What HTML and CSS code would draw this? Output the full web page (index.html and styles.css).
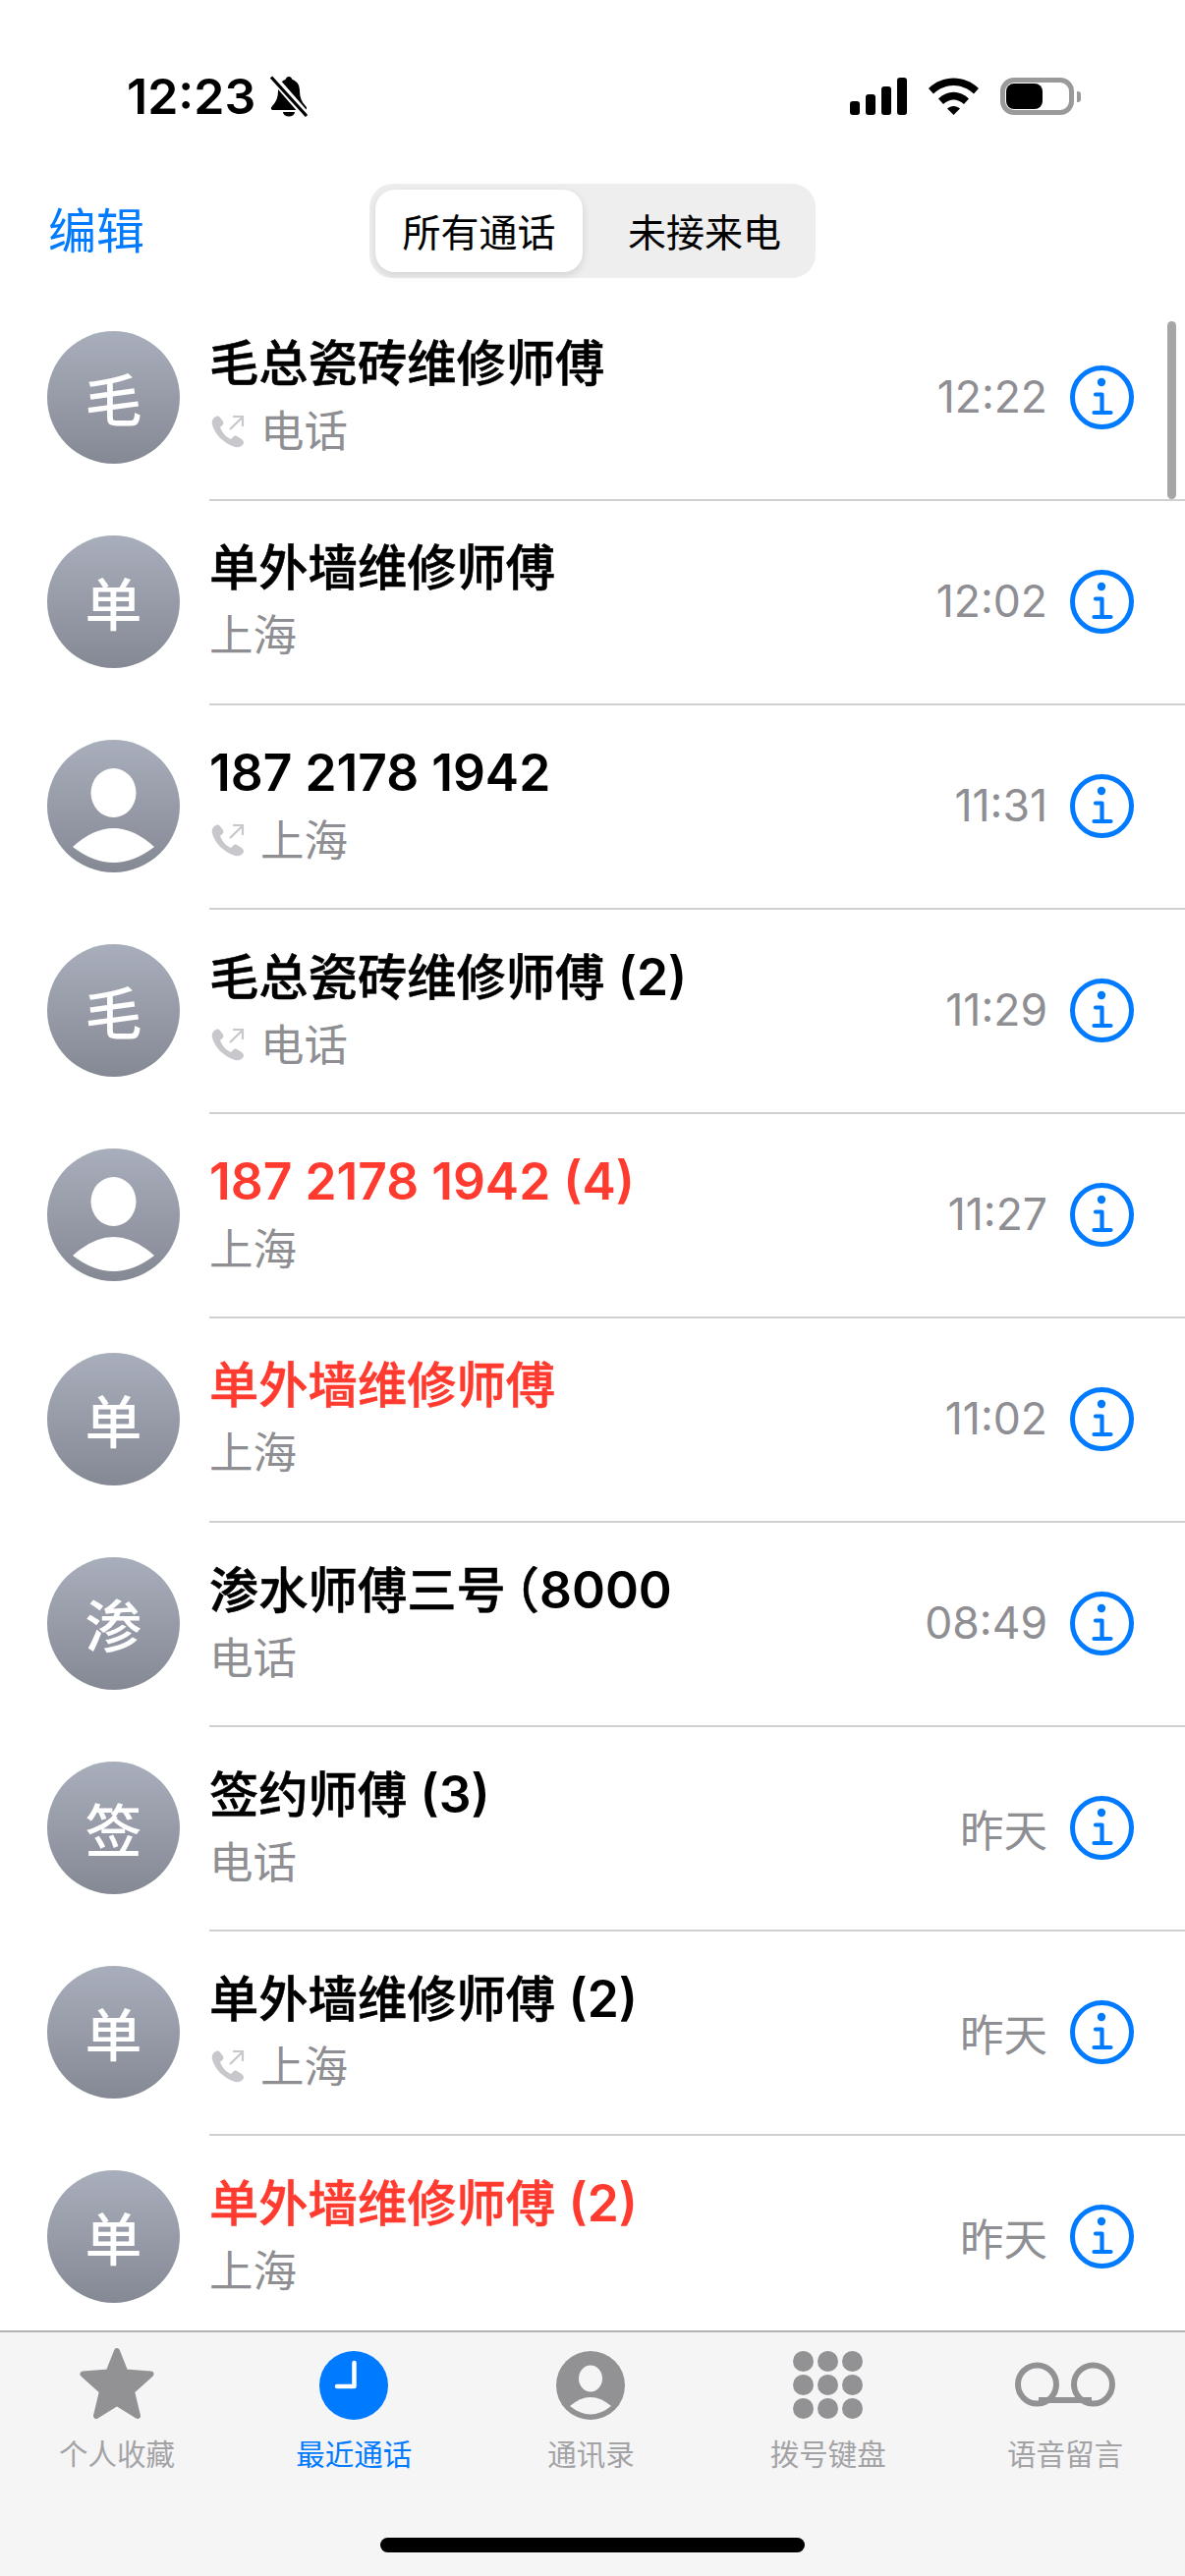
FILE: index.html
```html
<!DOCTYPE html>
<html lang="zh-CN">
<head>
  <meta charset="UTF-8">
  <meta name="viewport" content="width=device-width, initial-scale=1">
  <title>最近通话</title>
  <link rel="stylesheet" href="styles.css">
</head>
<body>
  <!-- icons -->
  <svg class="defs" xmlns="http://www.w3.org/2000/svg">
    <symbol id="i-info" viewBox="0 0 65 65">
      <circle cx="32.5" cy="32.5" r="30" fill="none" stroke="#007aff" stroke-width="5"/>
      <circle cx="32" cy="17" r="4.2" fill="#007aff"/>
      <path d="M26 29.5h6.5v18.5M24.5 48h17" fill="none" stroke="#007aff" stroke-width="4.2" stroke-linecap="round" stroke-linejoin="round"/>
    </symbol>
    <symbol id="i-out" viewBox="0 0 34 33">
      <path d="M5 1C2 2 0 5 1 9c2 9 11 19 23 23 4 1 8-1 9-4 0-2-1-3-2-4l-5-3c-2-1-3 0-4 1l-2 2c-5-2-9-7-11-12l2-2c1-1 2-2 1-4L9 2C8 1 7 0 5 1z" fill="#c7c7cc"/>
      <path d="M19 14L32 1.5M22 1h10v10" fill="none" stroke="#c7c7cc" stroke-width="2.2"/>
    </symbol>
    <symbol id="i-person" viewBox="0 0 135 135">
      <ellipse cx="67.5" cy="54" rx="23" ry="25" fill="#fff"/>
      <path d="M26 109Q67.500 71 109 109Q67.500 141 26 109z" fill="#fff"/>
    </symbol>
  </svg>

  <div class="screen">
    <!-- status bar -->
    <div class="status">
      <div class="status-left">
        <span class="clock">12:23</span>
        <svg class="bell" width="40" height="42" viewBox="0 0 40 42">
          <path d="M20 1c-2 0-3 1.500-3.500 3C11 6 9 10 9 16c0 6-2 11-6 15-2 2-1 4 1 4h32c2 0 3-2 1-4-4-4-6-9-6-15 0-6-2-10-7.500-12C23 2.500 22 1 20 1z"/>
          <path d="M14 37a6 4.500 0 0 0 12 0z"/>
          <path d="M3 1l35 40" stroke="#fff" stroke-width="8"/>
          <path d="M2 1.500l36 39.500" stroke="#000" stroke-width="3.200"/>
        </svg>
      </div>
      <div class="status-right">
        <div class="signal">
          <span class="bar bar-1"></span>
          <span class="bar bar-2"></span>
          <span class="bar bar-3"></span>
          <span class="bar bar-4"></span>
        </div>
        <svg width="51" height="38" viewBox="0 0 51 38">
          <path d="M0 11C14-3 37-3 51 11l-5 5.500C34 5 17 5 5 16.500z"/>
          <path d="M10 21.500c9-9 22-9 31 0l-5 5.500c-7-6-14-6-21 0z"/>
          <path d="M19 31.500c4-3.500 9-3.500 13 0L25.500 38z"/>
        </svg>
        <div class="battery">
          <div class="battery-body"><span class="battery-fill"></span></div>
          <span class="battery-tip"></span>
        </div>
      </div>
    </div>

    <!-- header -->
    <div class="header">
      <a class="edit">编辑</a>
      <div class="segment">
        <span class="segment-item selected">所有通话</span>
        <span class="segment-item">未接来电</span>
      </div>
    </div>

    <!-- call list -->
    <div class="list">
      <div class="scroll-thumb"></div>

      <div class="row">
        <div class="avatar">毛</div>
        <div class="row-body">
          <div class="row-text">
            <div class="name">毛总瓷砖维修师傅</div>
            <div class="sub"><svg class="out" width="34" height="33"><use href="#i-out"/></svg>电话</div>
          </div>
          <span class="time">12:22</span>
          <svg class="info" width="65" height="65"><use href="#i-info"/></svg>
        </div>
      </div>

      <div class="row">
        <div class="avatar">单</div>
        <div class="row-body">
          <div class="row-text">
            <div class="name">单外墙维修师傅</div>
            <div class="sub">上海</div>
          </div>
          <span class="time">12:02</span>
          <svg class="info" width="65" height="65"><use href="#i-info"/></svg>
        </div>
      </div>

      <div class="row">
        <div class="avatar"><svg width="135" height="135"><use href="#i-person"/></svg></div>
        <div class="row-body">
          <div class="row-text">
            <div class="name"><span class="num">187 2178 1942</span></div>
            <div class="sub"><svg class="out" width="34" height="33"><use href="#i-out"/></svg>上海</div>
          </div>
          <span class="time">11:31</span>
          <svg class="info" width="65" height="65"><use href="#i-info"/></svg>
        </div>
      </div>

      <div class="row">
        <div class="avatar">毛</div>
        <div class="row-body">
          <div class="row-text">
            <div class="name">毛总瓷砖维修师傅 <span class="num">(2)</span></div>
            <div class="sub"><svg class="out" width="34" height="33"><use href="#i-out"/></svg>电话</div>
          </div>
          <span class="time">11:29</span>
          <svg class="info" width="65" height="65"><use href="#i-info"/></svg>
        </div>
      </div>

      <div class="row">
        <div class="avatar"><svg width="135" height="135"><use href="#i-person"/></svg></div>
        <div class="row-body">
          <div class="row-text">
            <div class="name missed"><span class="num">187 2178 1942 (4)</span></div>
            <div class="sub">上海</div>
          </div>
          <span class="time">11:27</span>
          <svg class="info" width="65" height="65"><use href="#i-info"/></svg>
        </div>
      </div>

      <div class="row">
        <div class="avatar">单</div>
        <div class="row-body">
          <div class="row-text">
            <div class="name missed">单外墙维修师傅</div>
            <div class="sub">上海</div>
          </div>
          <span class="time">11:02</span>
          <svg class="info" width="65" height="65"><use href="#i-info"/></svg>
        </div>
      </div>

      <div class="row">
        <div class="avatar">渗</div>
        <div class="row-body">
          <div class="row-text">
            <div class="name">渗水师傅三号<span class="paren">（</span><span class="num">8000</span></div>
            <div class="sub">电话</div>
          </div>
          <span class="time">08:49</span>
          <svg class="info" width="65" height="65"><use href="#i-info"/></svg>
        </div>
      </div>

      <div class="row">
        <div class="avatar">签</div>
        <div class="row-body">
          <div class="row-text">
            <div class="name">签约师傅 <span class="num">(3)</span></div>
            <div class="sub">电话</div>
          </div>
          <span class="time">昨天</span>
          <svg class="info" width="65" height="65"><use href="#i-info"/></svg>
        </div>
      </div>

      <div class="row">
        <div class="avatar">单</div>
        <div class="row-body">
          <div class="row-text">
            <div class="name">单外墙维修师傅 <span class="num">(2)</span></div>
            <div class="sub"><svg class="out" width="34" height="33"><use href="#i-out"/></svg>上海</div>
          </div>
          <span class="time">昨天</span>
          <svg class="info" width="65" height="65"><use href="#i-info"/></svg>
        </div>
      </div>

      <div class="row">
        <div class="avatar">单</div>
        <div class="row-body">
          <div class="row-text">
            <div class="name missed">单外墙维修师傅 <span class="num">(2)</span></div>
            <div class="sub">上海</div>
          </div>
          <span class="time">昨天</span>
          <svg class="info" width="65" height="65"><use href="#i-info"/></svg>
        </div>
      </div>
    </div>

    <!-- tab bar -->
    <div class="tabs">
      <div class="tab">
        <svg width="76" height="74" viewBox="0 0 76 74">
          <path d="M38 4l8.500 21.500 26 2L53 45l6 25-21-13-21 13 6-25L3.500 27.500l26-2z" fill="#929295" stroke="#929295" stroke-width="6" stroke-linejoin="round"/>
        </svg>
        <span class="tab-label">个人收藏</span>
      </div>
      <div class="tab active">
        <svg width="70" height="74" viewBox="0 0 70 74">
          <circle cx="35" cy="39" r="35" fill="#007aff"/>
          <path d="M35.500 16v24H18" fill="none" stroke="#fff" stroke-width="4.500" stroke-linecap="round" stroke-linejoin="round"/>
        </svg>
        <span class="tab-label">最近通话</span>
      </div>
      <div class="tab">
        <svg width="70" height="74" viewBox="0 0 70 74">
          <circle cx="35" cy="39" r="35" fill="#929295"/>
          <ellipse cx="35" cy="32" rx="12" ry="13.500" fill="#f5f5f6"/>
          <path d="M14 60Q35 42 56 60Q35 77 14 60z" fill="#f5f5f6"/>
        </svg>
        <span class="tab-label">通讯录</span>
      </div>
      <div class="tab">
        <div class="keypad">
          <span></span><span></span><span></span>
          <span></span><span></span><span></span>
          <span></span><span></span><span></span>
        </div>
        <span class="tab-label">拨号键盘</span>
      </div>
      <div class="tab">
        <svg width="102" height="74" viewBox="0 0 102 74">
          <path d="M24 54h54" stroke="#929295" stroke-width="6"/>
          <circle cx="22.500" cy="38" r="19.500" fill="none" stroke="#929295" stroke-width="6"/>
          <circle cx="79.500" cy="38" r="19.500" fill="none" stroke="#929295" stroke-width="6"/>
        </svg>
        <span class="tab-label">语音留言</span>
      </div>
      <div class="home-bar"></div>
    </div>
  </div>
</body>
</html>
```

FILE: styles.css
```css
body { margin: 0; background: #fff; color: #000; font-family: Inter, "Noto Sans CJK SC", sans-serif; }
.defs { display: none; }
.screen { width: 1206px; height: 2622px; display: flex; flex-direction: column; overflow: hidden; }

/* status bar */
.status { display: flex; justify-content: space-between; align-items: center; height: 42px; padding: 77px 106px 0 129px; flex: none; }
.status-left { display: flex; align-items: center; gap: 14px; }
.clock { font-size: 50px; font-weight: 600; line-height: 42px; }
.status-right { display: flex; align-items: center; gap: 22px; }
.signal { display: flex; align-items: flex-end; gap: 6px; height: 38px; }
.bar { width: 10px; background: #000; border-radius: 3px; }
.bar-1 { height: 14px; }
.bar-2 { height: 21px; }
.bar-3 { height: 29px; }
.bar-4 { height: 38px; }
.battery { display: flex; align-items: center; gap: 3px; }
.battery-body { width: 75px; height: 38px; box-sizing: border-box; border: 5px solid #9a9a9a; border-radius: 14px; padding: 1px; }
.battery-fill { display: block; width: 37px; height: 100%; background: #000; border-radius: 8px; }
.battery-tip { width: 4px; height: 11px; background: #9a9a9a; border-radius: 0 3px 3px 0; }

/* header */
.header { display: grid; grid-template-columns: 1fr auto 1fr; align-items: center; margin: 68px 0 17px; flex: none; }
.edit { font-size: 49px; line-height: 90px; color: #007aff; padding: 2px 0 0 49px; }
.segment { display: flex; width: 454px; height: 96px; box-sizing: border-box; padding: 6px; background: #eeeeef; border-radius: 24px; }
.segment-item { flex: 1; display: flex; align-items: center; justify-content: center; font-size: 39px; padding: 0 0 2px 17px; }
.segment-item.selected { flex: none; width: 211px; padding: 0 0 2px; background: #fff; border-radius: 20px; box-shadow: 0 3px 8px rgba(0,0,0,0.12); }

/* call list */
.list { flex: 1; min-height: 0; overflow: hidden; position: relative; }
.scroll-thumb { position: absolute; top: 27px; right: 9px; width: 9px; height: 181px; background: #a6a6a6; border-radius: 5px; }
.row { display: flex; align-items: center; height: 208px; padding-left: 48px; }
.avatar { width: 135px; height: 135px; flex: none; display: flex; align-items: center; justify-content: center; border-radius: 50%; background: linear-gradient(to bottom, #a9aebc, #858994); color: #fff; font-size: 58px; font-weight: 500; }
.row-body { flex: 1; height: 210px; align-self: flex-start; box-sizing: border-box; display: flex; align-items: center; margin-left: 30px; padding-right: 52px; border-bottom: 2px solid #d0d0d3; }
.row-text { flex: 1; min-width: 0; }
.name { font-size: 50.3px; font-weight: 500; line-height: 70px; white-space: nowrap; -webkit-text-stroke: 0.5px currentColor; }
.name.missed { color: #ff3b30; }
.paren { font-feature-settings: "halt"; margin-left: 9px; }
.num { font-size: 51.5px; font-weight: 600; -webkit-text-stroke: 0; }
.sub { display: flex; align-items: center; font-size: 44.5px; line-height: 68px; color: #8e8e93; }
.out { margin: 0 16px 0 2px; }
.time { font-size: 44.5px; color: #8e8e93; margin-right: 23px; }
.info { flex: none; }

/* tab bar */
.tabs { display: grid; grid-template-columns: repeat(5, 1fr); align-content: start; height: 250px; flex: none; box-sizing: border-box; border-top: 2px solid #b4b4b6; background: #f5f5f6; padding-top: 15px; position: relative; }
.tab { display: flex; flex-direction: column; align-items: center; gap: 15px; padding-right: 3px; }
.tab-label { font-size: 29.5px; line-height: 40px; color: #a3a3a6; }
.tab.active .tab-label { color: #007aff; }
.keypad { display: grid; grid-template-columns: repeat(3, 21px); grid-auto-rows: 21px; gap: 3px 4px; padding-top: 4px; height: 70px; }
.keypad span { background: #929295; border-radius: 50%; }
.home-bar { position: absolute; left: 387px; bottom: 24px; width: 432px; height: 15px; background: #000; border-radius: 8px; }
```
